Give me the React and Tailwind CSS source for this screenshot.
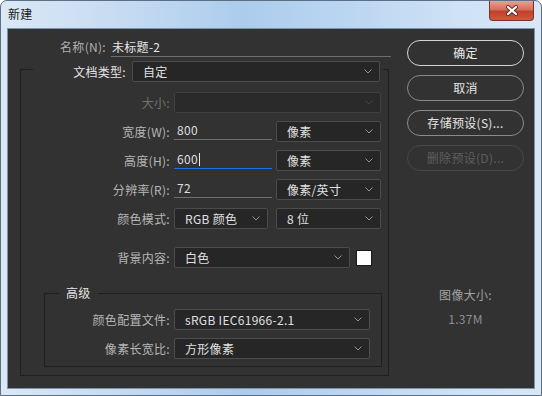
import React from "react"

function Chevron({ dim }) {
  return (
    <svg width="8" height="5" viewBox="0 0 8 5" className="shrink-0">
      <path d="M0.5 0.5 L4 4 L7.5 0.5" fill="none" stroke={dim ? "#4a4a4a" : "#a0a0a0"} strokeWidth="0.9" />
    </svg>
  )
}

function Select({ value, width, disabled }) {
  return (
    <div
      className={`flex h-[21px] items-center justify-between rounded-[2px] border pl-[10px] pr-[7px] ${
        disabled ? "border-[#404040] bg-[#2a2a2a]" : "border-[#4c4c4c] bg-[#262626]"
      } ${width}`}
    >
      <span className="whitespace-pre text-[#e0e0e0]">{value}</span>
      <Chevron dim={disabled} />
    </div>
  )
}

function Input({ value, width, focused }) {
  return (
    <div
      className={`flex h-[19px] items-center self-start border-b pl-[3px] text-[#dedede] ${
        focused ? "border-[#1473e6]" : "border-[#6e6e6e]"
      } ${width}`}
    >
      {value}
      {focused && <span className="ml-[1px] h-[13px] w-px bg-[#e8e8e8]" />}
    </div>
  )
}

function Row({ label, labelWidth, disabled, children, className }) {
  return (
    <div className={`flex h-[21px] items-center ${className}`}>
      <div className={`${labelWidth} text-right ${disabled ? "text-[#707070]" : "text-[#b6b6b6]"}`}>{label}</div>
      <div className="ml-[4px] flex items-center gap-[4px]">{children}</div>
    </div>
  )
}

function PillButton({ children, kind }) {
  const styles = {
    primary: "border-[#d4d4d4] text-[#ececec]",
    normal: "border-[#8a8a8a] text-[#e6e6e6]",
    disabled: "border-[#474747] text-[#5e5e5e]",
  }
  return (
    <div className={`h-[26px] rounded-full border text-center leading-[24px] ${styles[kind]}`}>
      {children}
    </div>
  )
}

export default function App() {
  return (
    <div className="h-[396px] w-[542px] overflow-hidden rounded-t-[7px] border border-[#5b6f86] bg-[linear-gradient(90deg,#dbe8f6_0%,#c3d9f1_25%,#acccec_45%,#bcd6f1_65%,#cfe2f6_85%,#d9e7f6_100%)] font-['Noto_Sans_CJK_SC',sans-serif] text-[12px] tracking-[0.3px]">
      {/* Title bar */}
      <div className="flex h-[27px] items-start justify-between pl-[7px] pr-[7px]">
        <div className="mt-[5px] text-[12px] leading-[16px] text-[#1a1a1a]">新建</div>
        <div className="flex h-[20px] w-[45px] items-center justify-center rounded-b-[4px] border border-t-0 border-[#7c3026] bg-[linear-gradient(180deg,#e6a293_0%,#d46f5b_45%,#c2412b_55%,#d0583f_100%)]">
          <svg width="14" height="11" viewBox="0 0 14 11">
            <path d="M3 2 L11 9 M11 2 L3 9" stroke="#5a2a24" strokeWidth="4" strokeLinecap="round" />
            <path d="M3 2 L11 9 M11 2 L3 9" stroke="#ffffff" strokeWidth="2.2" strokeLinecap="round" />
          </svg>
        </div>
      </div>

      {/* Client area */}
      <div className="mx-[6px] border border-[#7d93ad]">
        <div className="flex h-[359px] bg-[#323232] pt-[8px]">
          {/* Left column */}
          <div className="flex w-[383px] flex-col">
            <div className="flex h-[20px] items-center">
              <div className="w-[98px] text-right text-[#b0b0b0]">名称(N):</div>
              <div className="ml-[5px] flex h-[20px] w-[280px] items-center border-b border-[#6e6e6e] pl-[1px] text-[#e6e6e6]">
                未标题-2
              </div>
            </div>

            <div className="ml-[12px] mt-[12px] flex w-[369px] flex-col border border-[#1f1f1f] pb-[8px]">
              <div className="-mt-[9px] ml-[12px] flex h-[21px] w-[350px] items-center bg-[#323232] pr-[3px]">
                <div className="w-[93px] text-right text-[#e4e4e4]">文档类型:</div>
                <div className="ml-[6px]">
                  <Select value="自定" width="w-[248px]" />
                </div>
              </div>

              <Row label="大小:" labelWidth="w-[149px]" disabled className="mt-[10px]">
                <Select value="" width="w-[207px]" disabled />
              </Row>
              <Row label="宽度(W):" labelWidth="w-[149px]" className="mt-[8px]">
                <Input value="800" width="w-[98px]" />
                <Select value="像素" width="w-[105px]" />
              </Row>
              <Row label="高度(H):" labelWidth="w-[149px]" className="mt-[8px]">
                <Input value="600" width="w-[98px]" focused />
                <Select value="像素" width="w-[105px]" />
              </Row>
              <Row label="分辨率(R):" labelWidth="w-[149px]" className="mt-[8px]">
                <Input value="72" width="w-[98px]" />
                <Select value="像素/英寸" width="w-[105px]" />
              </Row>
              <Row label="颜色模式:" labelWidth="w-[149px]" className="mt-[8px]">
                <Select value="RGB 颜色" width="w-[94px]" />
                <div className="ml-[4px]">
                  <Select value="8 位" width="w-[105px]" />
                </div>
              </Row>
              <Row label="背景内容:" labelWidth="w-[149px]" className="mt-[18px]">
                <Select value="白色" width="w-[176px]" />
                <div className="ml-[2px] h-[16px] w-[16px] border border-[#1a1a1a] bg-white" />
              </Row>

              {/* Advanced */}
              <div className="ml-[23px] mt-[25px] flex w-[338px] flex-col border border-[#1f1f1f] pb-[7px]">
                <div className="-mt-[9px] ml-[14px] self-start bg-[#323232] px-[7px] leading-[16px] text-[#e4e4e4]">
                  高级
                </div>
                <Row label="颜色配置文件:" labelWidth="w-[125px]" className="mt-[8px]">
                  <Select value="sRGB IEC61966-2.1" width="w-[196px]" />
                </Row>
                <Row label="像素长宽比:" labelWidth="w-[125px]" className="mt-[8px]">
                  <Select value="方形像素" width="w-[196px]" />
                </Row>
              </div>
            </div>
          </div>

          {/* Right column */}
          <div className="ml-[16px] flex w-[117px] flex-col pt-[3px]">
            <div className="flex flex-col gap-[9px]">
              <PillButton kind="primary">确定</PillButton>
              <PillButton kind="normal">取消</PillButton>
              <PillButton kind="normal">存储预设(S)...</PillButton>
              <PillButton kind="disabled">删除预设(D)...</PillButton>
            </div>
            <div className="mt-[116px] text-center leading-[16px] text-[#a2a2a2]">图像大小:</div>
            <div className="mt-[8px] text-center leading-[16px] text-[#8e8e8e]">1.37M</div>
          </div>
        </div>
      </div>
    </div>
  )
}
